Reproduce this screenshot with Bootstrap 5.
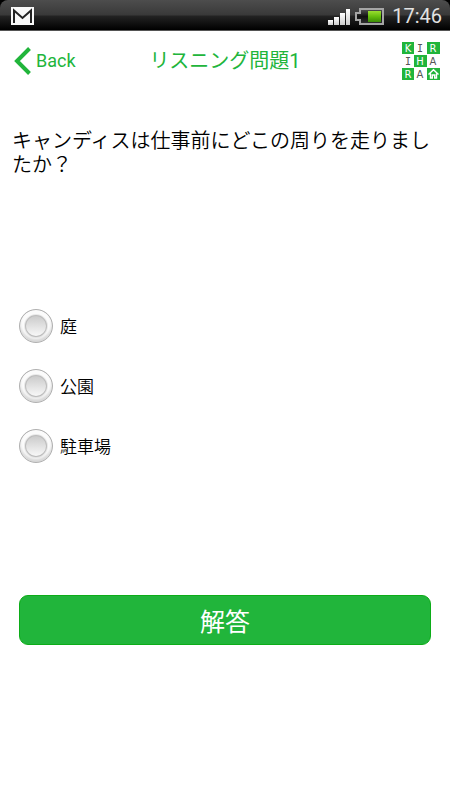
<!DOCTYPE html>
<html lang="ja">
<head>
<meta charset="utf-8">
<meta name="viewport" content="width=device-width, initial-scale=1">
<title>リスニング問題1</title>
<link href="https://cdn.jsdelivr.net/npm/bootstrap@5.3.0/dist/css/bootstrap.min.css" rel="stylesheet">
<style>
  :root { --leaf: #21b53b; }
  body { font-family: Roboto, "Noto Sans CJK JP", sans-serif; color: #000; background: #fff; }
  .status-wrap { background: #000; }
  .status-bar {
    height: 31px; padding: 2px 8px 0 11px; border-radius: 8px 8px 0 0;
    background: linear-gradient(#4d4d4d 0, #393939 15px, #232323 16px, #000 30px);
    border-bottom: 1px solid #555;
  }
  .clock { font-size: 20px; line-height: 28px; color: #e2e2e2; }
  .app-header { display: grid; grid-template-columns: 1fr auto 1fr; height: 60px; padding: 0 10px; }
  .back-link { color: var(--leaf); font-size: 18px; line-height: 24px; padding-left: 4px; }
  .page-title { color: var(--leaf); font-size: 20px; line-height: 24px; font-weight: 400; }
  .question { font-size: 20px; line-height: 24px; font-weight: 350; padding: 38px 12px 0; min-height: 205px; }
  .choice { height: 60px; gap: 7px; }
  .choice label { font-size: 17px; line-height: 24px; font-weight: 350; padding-top: 1px; }
  .choice-list { padding: 0 19px; }
  .choice .form-check-input {
    width: 34px; height: 34px; border: 1px solid #b0b0b0;
    background: linear-gradient(#cbcbcb 6px, #f8f8f8 26px);
    box-shadow: inset 0 -3px 3px #00000026, inset 0 0 0 4px #fbfbfb, inset 0 0 0 5px #e9e9e9, inset 0 0 0 6px #bdbdbd;
  }
  .choice .form-check-input:checked { background: var(--leaf); }
  .answer-area { padding: 119px 19px 24px; }
  .answer-btn {
    --bs-btn-color: #fff; --bs-btn-bg: #21b53b; --bs-btn-border-color: #0cac18;
    --bs-btn-hover-color: #fff; --bs-btn-hover-bg: #1ba334; --bs-btn-hover-border-color: #0b9a16;
    --bs-btn-active-color: #fff; --bs-btn-active-bg: #178e2d; --bs-btn-active-border-color: #0b8a14;
    --bs-btn-border-radius: 9px; --bs-btn-font-size: 25px;
    height: 50px; line-height: 30px; padding: 11px 12px 5px;
  }
</style>
</head>
<body>
<div class="status-wrap">
  <div class="status-bar d-flex align-items-center">
    <svg width="23" height="18" viewBox="0 0 23 18" role="img" aria-label="Mail">
      <rect width="23" height="18" fill="#f8f8f8"/>
      <path d="M3 16V3.5L11.5 11 20 3.5V16" fill="none" stroke="#222" stroke-width="2"/>
    </svg>
    <svg class="ms-auto" width="23" height="18" viewBox="0 0 23 18" role="img" aria-label="Signal">
      <defs><linearGradient id="sig" x2="0" y2="1"><stop stop-color="#fff"/><stop offset="1" stop-color="#ccc"/></linearGradient></defs>
      <g fill="url(#sig)"><rect x="0" y="13" width="5" height="5"/><rect x="6" y="10" width="5" height="8"/><rect x="12" y="6" width="5" height="12"/><rect x="18" y="2" width="4" height="16"/></g>
    </svg>
    <svg class="ms-1" width="29" height="17" viewBox="0 0 29 17" role="img" aria-label="Battery">
      <defs>
        <linearGradient id="cell" x2="0" y2="1"><stop stop-color="#9ade30"/><stop offset=".5" stop-color="#65bd0e"/><stop offset="1" stop-color="#3b8c05"/></linearGradient>
        <linearGradient id="void" x2="0" y2="1"><stop stop-color="#555"/><stop offset=".5" stop-color="#111"/><stop offset="1" stop-color="#333"/></linearGradient>
      </defs>
      <path d="M5 1H28V16H5V12H1V5H5Z" fill="url(#void)" stroke="#a5a5a5" stroke-width="2"/>
      <rect x="13" y="3" width="13" height="11" fill="url(#cell)"/>
    </svg>
    <span class="clock ms-2">17:46</span>
  </div>
</div>

<header class="app-header align-items-center">
  <a class="back-link d-flex align-items-center text-decoration-none" href="#">
    <svg class="me-1" width="18" height="28" viewBox="0 0 18 28" aria-hidden="true">
      <path d="M15.5 1.5L3 14 15.5 26.5" fill="none" stroke="currentColor" stroke-width="4"/>
    </svg>
    <span>Back</span>
  </a>
  <h1 class="page-title m-0">リスニング問題1</h1>
  <a class="ms-auto d-flex" href="#" aria-label="Kirihara home">
    <svg width="38" height="38" viewBox="0 0 38 38" font-family="DejaVu Sans, sans-serif" font-size="10" text-anchor="middle">
      <g fill="#21b53b"><rect width="12" height="12"/><rect x="25" width="13" height="12"/><rect x="12" y="13" width="13" height="12"/><rect y="26" width="12" height="12"/><rect x="25" y="26" width="13" height="12"/></g>
      <g fill="#fff"><text x="6" y="10">K</text><text x="31" y="10">R</text><text x="18" y="23">H</text><text x="6" y="36">R</text></g>
      <g fill="#555" font-family="DejaVu Sans Mono, monospace"><text x="18" y="10">I</text><text x="6" y="23">I</text></g>
      <g fill="#555"><text x="31" y="23">A</text><text x="18" y="36">A</text></g>
      <path d="M26.5 32.5L31.5 27.8 36.5 32.5M28.5 31.5V36H30.3V33H32.7V36H34.5V31.5" fill="none" stroke="#fff" stroke-width="1.4"/>
    </svg>
  </a>
</header>

<main>
  <form>
    <p class="question m-0" id="question">キャンディスは仕事前にどこの周りを走りましたか？</p>
    <div class="choice-list" role="radiogroup" aria-labelledby="question">
      <div class="choice d-flex align-items-center">
        <input class="form-check-input m-0" type="radio" name="answer" id="c1"><label for="c1">庭</label>
      </div>
      <div class="choice d-flex align-items-center">
        <input class="form-check-input m-0" type="radio" name="answer" id="c2"><label for="c2">公園</label>
      </div>
      <div class="choice d-flex align-items-center">
        <input class="form-check-input m-0" type="radio" name="answer" id="c3"><label for="c3">駐車場</label>
      </div>
    </div>
    <div class="answer-area">
      <button class="btn answer-btn w-100" type="button">解答</button>
    </div>
  </form>
</main>
<script src="https://cdn.jsdelivr.net/npm/bootstrap@5.3.0/dist/js/bootstrap.bundle.min.js"></script>
</body>
</html>
